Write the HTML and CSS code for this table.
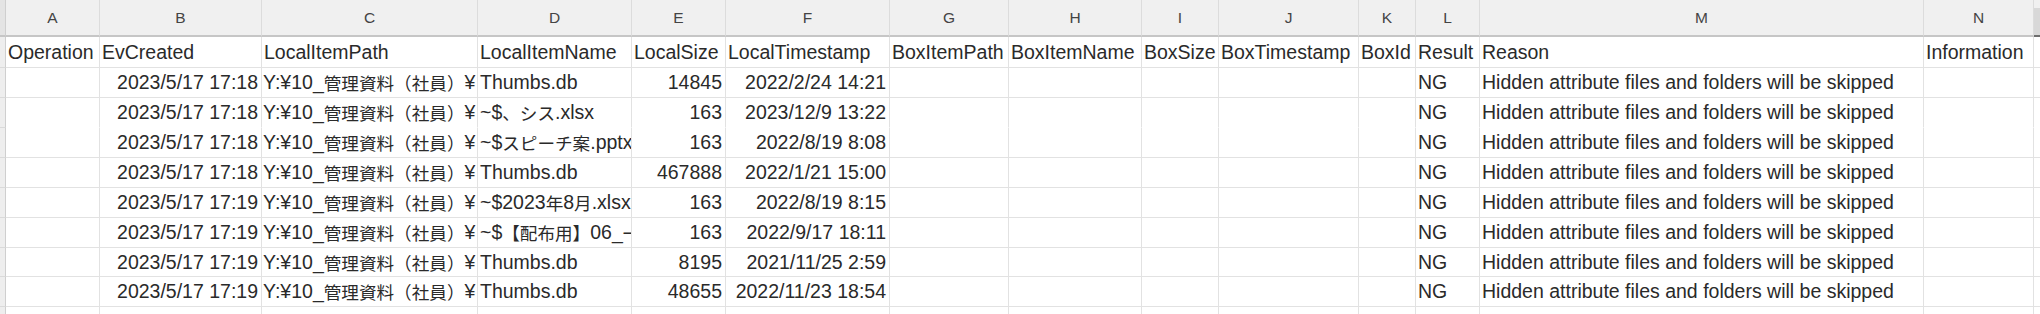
FILE: index.html
```html
<!DOCTYPE html>
<html lang="ja">
<head>
<meta charset="utf-8">
<title>Sheet</title>
<link rel="stylesheet" href="styles.css">
</head>
<body>
<div class="sheet">
  <div class="row colhead">
    <div class="c stub"></div>
    <div class="c">A</div><div class="c">B</div><div class="c">C</div><div class="c">D</div>
    <div class="c">E</div><div class="c">F</div><div class="c">G</div><div class="c">H</div>
    <div class="c">I</div><div class="c">J</div><div class="c">K</div><div class="c">L</div>
    <div class="c">M</div><div class="c">N</div><div class="c sel"></div>
  </div>

  <div class="row r31">
    <div class="c stub"></div>
    <div class="c">Operation</div><div class="c">EvCreated</div><div class="c">LocalItemPath</div>
    <div class="c">LocalItemName</div><div class="c">LocalSize</div><div class="c">LocalTimestamp</div>
    <div class="c">BoxItemPath</div><div class="c">BoxItemName</div><div class="c">BoxSize</div>
    <div class="c">BoxTimestamp</div><div class="c">BoxId</div><div class="c">Result</div>
    <div class="c">Reason</div><div class="c">Information</div><div class="c last"></div>
  </div>

  <div class="row">
    <div class="c stub"></div><div class="c"></div>
    <div class="c num">2023/5/17 17:18</div>
    <div class="c path">Y:¥10_<span class="jp">管理資料（社員）</span>¥</div>
    <div class="c">Thumbs.db</div>
    <div class="c num">14845</div><div class="c num">2022/2/24 14:21</div>
    <div class="c"></div><div class="c"></div><div class="c"></div><div class="c"></div><div class="c"></div>
    <div class="c">NG</div><div class="c">Hidden attribute files and folders will be skipped</div>
    <div class="c"></div><div class="c last"></div>
  </div>

  <div class="row nob">
    <div class="c stub"></div><div class="c"></div>
    <div class="c num">2023/5/17 17:18</div>
    <div class="c path">Y:¥10_<span class="jp">管理資料（社員）</span>¥</div>
    <div class="c">~$<span class="jp">、シス</span>.xlsx</div>
    <div class="c num">163</div><div class="c num">2023/12/9 13:22</div>
    <div class="c"></div><div class="c"></div><div class="c"></div><div class="c"></div><div class="c"></div>
    <div class="c">NG</div><div class="c">Hidden attribute files and folders will be skipped</div>
    <div class="c"></div><div class="c last"></div>
  </div>

  <div class="row">
    <div class="c stub"></div><div class="c"></div>
    <div class="c num">2023/5/17 17:18</div>
    <div class="c path">Y:¥10_<span class="jp">管理資料（社員）</span>¥</div>
    <div class="c">~$<span class="jp">スピーチ案</span>.pptx</div>
    <div class="c num">163</div><div class="c num">2022/8/19 8:08</div>
    <div class="c"></div><div class="c"></div><div class="c"></div><div class="c"></div><div class="c"></div>
    <div class="c">NG</div><div class="c">Hidden attribute files and folders will be skipped</div>
    <div class="c"></div><div class="c last"></div>
  </div>

  <div class="row">
    <div class="c stub"></div><div class="c"></div>
    <div class="c num">2023/5/17 17:18</div>
    <div class="c path">Y:¥10_<span class="jp">管理資料（社員）</span>¥</div>
    <div class="c">Thumbs.db</div>
    <div class="c num">467888</div><div class="c num">2022/1/21 15:00</div>
    <div class="c"></div><div class="c"></div><div class="c"></div><div class="c"></div><div class="c"></div>
    <div class="c">NG</div><div class="c">Hidden attribute files and folders will be skipped</div>
    <div class="c"></div><div class="c last"></div>
  </div>

  <div class="row">
    <div class="c stub"></div><div class="c"></div>
    <div class="c num">2023/5/17 17:19</div>
    <div class="c path">Y:¥10_<span class="jp">管理資料（社員）</span>¥</div>
    <div class="c">~$2023<span class="jp">年</span>8<span class="jp">月</span>.xlsx</div>
    <div class="c num">163</div><div class="c num">2022/8/19 8:15</div>
    <div class="c"></div><div class="c"></div><div class="c"></div><div class="c"></div><div class="c"></div>
    <div class="c">NG</div><div class="c">Hidden attribute files and folders will be skipped</div>
    <div class="c"></div><div class="c last"></div>
  </div>

  <div class="row">
    <div class="c stub"></div><div class="c"></div>
    <div class="c num">2023/5/17 17:19</div>
    <div class="c path">Y:¥10_<span class="jp">管理資料（社員）</span>¥</div>
    <div class="c">~$<span class="jp">【配布用】</span>06_<span class="jp">一覧表</span>.xlsx</div>
    <div class="c num">163</div><div class="c num">2022/9/17 18:11</div>
    <div class="c"></div><div class="c"></div><div class="c"></div><div class="c"></div><div class="c"></div>
    <div class="c">NG</div><div class="c">Hidden attribute files and folders will be skipped</div>
    <div class="c"></div><div class="c last"></div>
  </div>

  <div class="row r29">
    <div class="c stub"></div><div class="c"></div>
    <div class="c num">2023/5/17 17:19</div>
    <div class="c path">Y:¥10_<span class="jp">管理資料（社員）</span>¥</div>
    <div class="c">Thumbs.db</div>
    <div class="c num">8195</div><div class="c num">2021/11/25 2:59</div>
    <div class="c"></div><div class="c"></div><div class="c"></div><div class="c"></div><div class="c"></div>
    <div class="c">NG</div><div class="c">Hidden attribute files and folders will be skipped</div>
    <div class="c"></div><div class="c last"></div>
  </div>

  <div class="row">
    <div class="c stub"></div><div class="c"></div>
    <div class="c num">2023/5/17 17:19</div>
    <div class="c path">Y:¥10_<span class="jp">管理資料（社員）</span>¥</div>
    <div class="c">Thumbs.db</div>
    <div class="c num">48655</div><div class="c num">2022/11/23 18:54</div>
    <div class="c"></div><div class="c"></div><div class="c"></div><div class="c"></div><div class="c"></div>
    <div class="c">NG</div><div class="c">Hidden attribute files and folders will be skipped</div>
    <div class="c"></div><div class="c last"></div>
  </div>

  <div class="row r29">
    <div class="c stub"></div><div class="c"></div><div class="c"></div><div class="c"></div><div class="c"></div>
    <div class="c"></div><div class="c"></div><div class="c"></div><div class="c"></div><div class="c"></div>
    <div class="c"></div><div class="c"></div><div class="c"></div><div class="c"></div><div class="c"></div>
    <div class="c last"></div>
  </div>

  <div class="row">
    <div class="c stub"></div><div class="c"></div><div class="c"></div><div class="c"></div><div class="c"></div>
    <div class="c"></div><div class="c"></div><div class="c"></div><div class="c"></div><div class="c"></div>
    <div class="c"></div><div class="c"></div><div class="c"></div><div class="c"></div><div class="c"></div>
    <div class="c last"></div>
  </div>
</div>
</body>
</html>
```
FILE: styles.css
```css
html, body {
  margin: 0;
  padding: 0;
  background: #ffffff;
  overflow: hidden;
}

.sheet {
  --cols: 6px 94px 162px 216px 154px 94px 164px 119px 133px 77px 140px 57px 64px 444px 110px 1fr;
  width: 2040px;
  height: 314px;
  overflow: hidden;
  display: flex;
  flex-direction: column;
  font-family: "Liberation Sans", "Noto Sans CJK JP", sans-serif;
  font-size: 19.5px;
  color: #2a2a2a;
}

.row {
  display: grid;
  grid-template-columns: var(--cols);
  height: 30px;
  flex: none;
}

.row.r31 { height: 31px; }
.row.r29 { height: 29px; }

.c {
  box-sizing: border-box;
  display: flex;
  align-items: center;
  justify-content: flex-start;
  padding: 0 2px 0 2px;
  border-right: 1px solid #e2e2e2;
  border-bottom: 1px solid #e2e2e2;
  white-space: nowrap;
  overflow: hidden;
  min-width: 0;
}

.c.num {
  justify-content: flex-end;
  padding-right: 3px;
}

.c.path { padding-left: 1px; }

.c.last { border-right: none; }

.c.stub {
  background: #eeeeee;
  border-right: 1px solid #cfcfcf;
  border-bottom: 1px solid #dadada;
  padding: 0;
}

.row.nob .c { border-bottom-color: #ffffff; }
.row.nob .c.stub { border-bottom-color: #dadada; }

.jp {
  font-family: "Noto Sans CJK JP", sans-serif;
  font-size: 17.6px;
}

/* column letter header */
.colhead {
  height: 37px;
  background: #f0f0f0;
}

.colhead .c {
  justify-content: center;
  font-size: 15.5px;
  color: #444444;
  border-right: 1px solid #dcdcdc;
  border-bottom: 2px solid #c6c6c6;
  padding: 0;
}

.colhead .c.stub {
  background: #e4e4e4;
  border-right: 1px solid #cfcfcf;
  border-bottom: 2px solid #c6c6c6;
}

.colhead .c.sel {
  border-right: none;
  background: linear-gradient(#f0f0f0 0 8px, #d8d8d8 8px);
  border-bottom: 2px solid #6e6e6e;
}
```
